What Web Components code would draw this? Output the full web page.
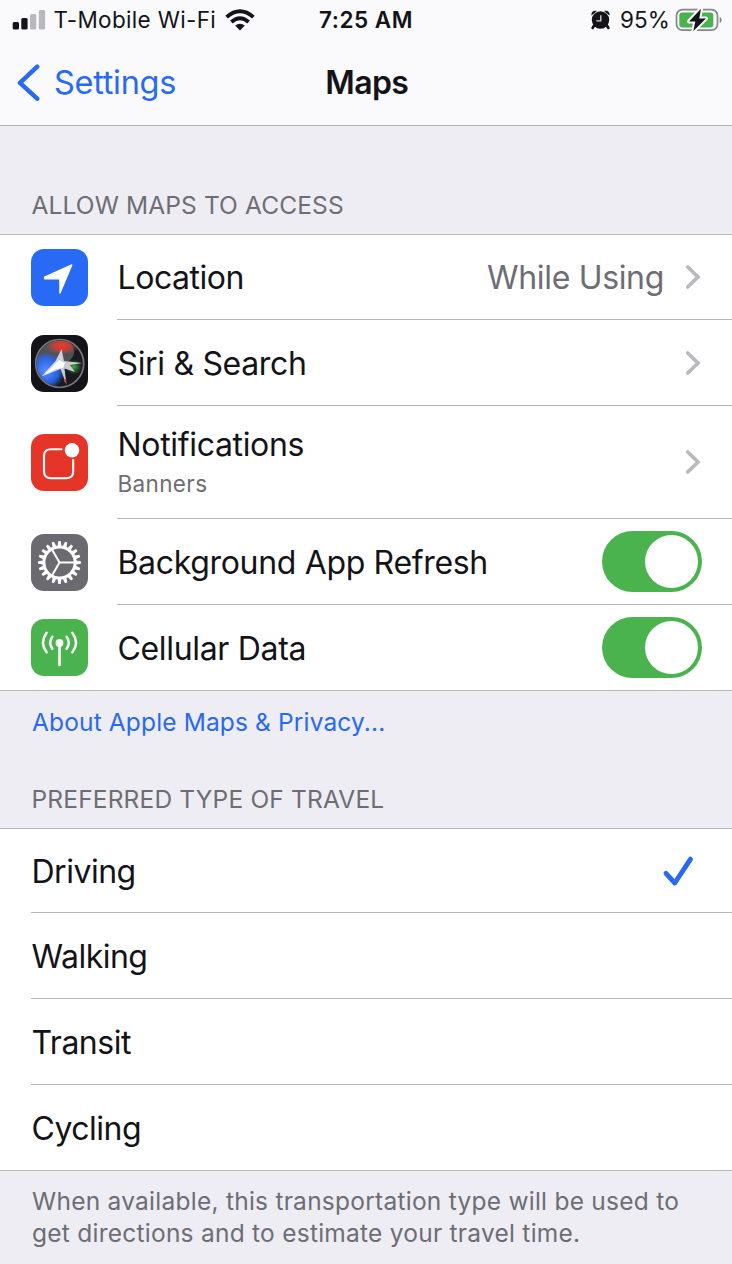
<!DOCTYPE html>
<html lang="en">
<head>
<meta charset="utf-8">
<title>Maps</title>
<style>
html, body { margin: 0; }
body { width: 732px; height: 1264px; overflow: hidden; background: #eeedf4; color: #131318; font-family: Inter, "Liberation Sans", sans-serif; }
</style>
</head>
<body>
<settings-screen></settings-screen>
<script>
const define = (name, html) => customElements.define(name, class extends HTMLElement {
  constructor() {
    super();
    this.attachShadow({ mode: 'open' }).innerHTML = html;
  }
});

define('status-bar', `
<style>
:host { display: grid; grid-template-columns: 1fr auto 1fr; align-items: center; height: 40px; padding: 0 12px; font-size: 22.5px; line-height: 40px; white-space: nowrap; }
div { display: flex; align-items: center; }
svg { display: block; flex: none; }
.carrier { margin-left: 7.5px; letter-spacing: .34px; }
.wifi { margin-left: 9px; }
.time { font-weight: 600; letter-spacing: .5px; }
.right { justify-content: flex-end; margin-right: -3px; }
.pct { margin: 0 5px 0 9.5px; letter-spacing: .1px; }
</style>
<div>
  <svg width="34" height="22" viewBox="0 0 34 22"><g fill="#131318"><rect x=".7" y="13" width="6.3" height="7.5" rx="1.5"/><rect x="9.3" y="9" width="6.3" height="11.5" rx="1.5"/></g><g fill="#b8b8bd"><rect x="18" y="5" width="6.3" height="15.5" rx="1.5"/><rect x="26.8" y="1" width="6.3" height="19.5" rx="1.5"/></g></svg>
  <span class="carrier">T-Mobile Wi-Fi</span>
  <svg class="wifi" width="30" height="22" viewBox="0 0 30 22"><g fill="none" stroke="#131318" stroke-width="3.9"><path d="M1.6 8.1Q15-3.7 28.4 8.1"/><path d="M6.4 13Q15 5.6 23.6 13"/></g><path fill="#131318" d="M10.2 16.6Q15 12.9 19.8 16.6L15 21.5Z"/></svg>
</div>
<span class="time">7:25 AM</span>
<div class="right">
  <svg width="19" height="20" viewBox="0 0 19 20"><g fill="#131318"><circle cx="9.5" cy="10" r="8.7"/><path d="M.6 5.6C-.4 2.5 2.6-.3 5.9 1.1ZM18.4 5.6C19.4 2.5 16.4-.3 13.1 1.1Z"/><path d="M3.4 15L1.6 18M15.6 15L17.4 18" stroke="#131318" stroke-width="2.6" stroke-linecap="round"/></g><path d="M9.8 5.2V10.8H5.4" fill="none" stroke="#ddd" stroke-width="1.3"/></svg>
  <span class="pct">95%</span>
  <svg width="48" height="26" viewBox="0 0 48 26"><rect x="1.5" y="2.7" width="41" height="20.5" rx="6" fill="none" stroke="#85858a" stroke-width="1.7"/><path d="M44.7 9.7q4 3.2 0 6.5z" fill="#85858a"/><rect x="4.3" y="5.4" width="34" height="15" rx="3.2" fill="#4ab34e"/><path d="M26 1.8L14 14.4H20.3L18.4 24L31 11.4H24.3Z" fill="#131318" stroke="#fafafc" stroke-width="4" paint-order="stroke" stroke-linejoin="round"/></svg>
</div>`);

define('nav-bar', `
<style>
:host { display: grid; grid-template-columns: 1fr auto 1fr; align-items: center; height: 85px; padding: 0 17px; border-bottom: 1px solid #b0b0b5; line-height: 40px; }
.back { display: flex; align-items: center; color: #2869f5; font-size: 32.5px; letter-spacing: -.3px; }
svg { display: block; margin-right: 13px; }
h1 { margin: 0; padding-left: 1.5px; font-size: 32px; font-weight: 600; letter-spacing: -.6px; line-height: 40px; }
</style>
<div class="back"><svg width="24" height="38" viewBox="0 0 24 38"><path d="M20.2 2.7L3 18.9L20.2 34.7" fill="none" stroke="#2869f5" stroke-width="4.5" stroke-linecap="round" stroke-linejoin="round"/></svg><span><slot name="back"></slot></span></div>
<h1><slot></slot></h1>`);

define('section-header', `
<style>
:host { display: flex; align-items: flex-end; box-sizing: border-box; height: var(--h); padding: 0 32px 13px 31.5px; color: #6d6d73; font-size: 24.5px; line-height: 32px; letter-spacing: var(--ls, .17px); white-space: nowrap; }
</style><slot></slot>`);

define('section-footer', `
<style>
:host { display: block; padding: 15px 32px 0; color: #6d6d73; font-size: 24.5px; line-height: 32px; letter-spacing: .25px; white-space: nowrap; }
:host([link]) { color: #2869f5; letter-spacing: .14px; }
:host(:not([link])) { padding-top: 14px; }
</style><slot></slot>`);

define('list-group', `
<style>
:host { display: block; background: #fff; border-top: 1px solid #b6b6bb; border-bottom: 1px solid #b6b6bb; }
</style><slot></slot>`);

define('list-row', `
<style>
:host { display: flex; box-sizing: border-box; height: var(--h, 86px); padding-left: 31px; }
.body { flex: 1; display: flex; align-items: center; padding-right: 30px; border-bottom: 1px solid #b6b6bb; font-size: 32px; line-height: 40px; white-space: nowrap; }
:host([last]) { height: 85px; }
:host([last]) .body { border-bottom: 0; }
.lead { display: flex; align-items: center; }
.lead ::slotted(*) { margin-right: 29px; }
.label { flex: 1; padding: 2px 0 0 .5px; letter-spacing: var(--ls, -.33px); }
</style>
<div class="lead"><slot name="icon"></slot></div>
<div class="body"><div class="label"><slot></slot></div><slot name="trail"></slot></div>`);

define('row-subtitle', `
<style>:host { display: block; font-size: 22.5px; line-height: 34px; margin-top: 2px; color: #6d6d73; letter-spacing: .35px; }</style><slot></slot>`);
define('row-value', `
<style>:host { display: block; padding-top: 2px; color: #6d6d73; margin-right: 20px; letter-spacing: -.33px; }</style><slot></slot>`);
define('row-chevron', `
<style>:host, svg { display: block; }</style>
<svg width="18" height="26" viewBox="0 0 18 26"><path d="M3.7 3L14 13L3.7 23" fill="none" stroke="#b8b8bd" stroke-width="3.6" stroke-linecap="round" stroke-linejoin="miter"/></svg>`);
define('row-check', `
<style>:host, svg { display: block; } :host { margin-right: 8px; }</style>
<svg width="32" height="32" viewBox="0 0 32 32"><path d="M4 18.3L12.8 28L28.5 4.2" fill="none" stroke="#2869f5" stroke-width="4.9" stroke-linecap="round" stroke-linejoin="round"/></svg>`);
define('toggle-switch', `
<style>
:host { display: flex; box-sizing: border-box; justify-content: flex-end; width: 100px; height: 61px; padding: 4px; border-radius: 31px; background: #4ab34e; }
span { width: 53px; height: 53px; border-radius: 50%; background: #fff; }
</style><span></span>`);

let teeth = '';
for (let i = 0; i < 20; i++) teeth += `<path d="M26.6 12L27.3 7.1H29.7L30.4 12Z" transform="rotate(${i * 18} 28.5 28.5)"/>`;
const glyphs = {
  location: ['#2869f5', '<path d="M13.6 28.2L40.8 15.9L28.9 44.2V29.8H13.6Z" fill="#fff" stroke="#fff" stroke-width="1.3" stroke-linejoin="round"/>'],
  siri: ['#131318', `<defs>
    <radialGradient id="b"><stop offset="0" stop-color="#5e91ff"/><stop offset=".65" stop-color="#2869f5" stop-opacity=".9"/><stop offset="1" stop-color="#2869f5" stop-opacity="0"/></radialGradient>
    <radialGradient id="r"><stop offset="0" stop-color="#e83b2d"/><stop offset=".5" stop-color="#d03c31" stop-opacity=".85"/><stop offset="1" stop-color="#66666b" stop-opacity="0"/></radialGradient>
    <radialGradient id="g"><stop offset="0" stop-color="#4ab34e"/><stop offset="1" stop-color="#24602a" stop-opacity="0"/></radialGradient>
    <clipPath id="c"><circle cx="28.7" cy="28.5" r="23"/></clipPath></defs>
    <circle cx="28.7" cy="28.5" r="24" fill="#19191e" stroke="#77777c" stroke-width="1.7"/>
    <g clip-path="url(#c)"><ellipse cx="22" cy="17" rx="21" ry="14" fill="#5a5a61" opacity=".85"/><ellipse cx="31" cy="11" rx="18" ry="9" fill="url(#r)"/><ellipse cx="15" cy="36" rx="19" ry="19" fill="url(#b)"/><ellipse cx="43" cy="32" rx="9" ry="8" fill="url(#g)"/></g>
    <path d="M10.5 41.5L24.5 26L30.5 14L33 26L51.5 28L39 30L44 37L33.5 33.5L35.5 50L29.5 34Z" fill="#dfe1e8" opacity=".88"/><path d="M13 40L28 25L34 28L32 33L25 34Z" fill="#fff"/><circle cx="34" cy="45.5" r="1.3" fill="#e83b2d"/>`],
  notifications: ['#e53529', '<path d="M30.5 15.2H20Q13 15.2 13 22.2V37.2Q13 44.2 20 44.2H35.2Q42.2 44.2 42.2 37.2V26" fill="none" stroke="#fff" stroke-width="2.1" stroke-linecap="round"/><circle cx="41" cy="16.3" r="7.2" fill="#fff"/>'],
  refresh: ['#6b6a71', `<g fill="#fff">${teeth}</g><circle cx="28.5" cy="28.5" r="15.6" fill="none" stroke="#fff" stroke-width="3"/><path d="M28.5 28.5H43.5M28.5 28.5L20.7 15M28.5 28.5L20.7 42" stroke="#fff" stroke-width="2"/>`],
  cellular: ['#4ab34e', '<circle cx="28.5" cy="24" r="3.9" fill="#fff"/><path d="M28.5 26V46" stroke="#fff" stroke-width="2.6" stroke-linecap="round"/><path d="M21.4 17.7Q17 23.7 21.4 29.7M35.6 17.7Q40 23.7 35.6 29.7M15.6 13.8Q8.4 23.7 15.6 33.2M41.4 13.8Q48.6 23.7 41.4 33.2" fill="none" stroke="#fff" stroke-width="2.5" stroke-linecap="round"/>']
};
customElements.define('app-icon', class extends HTMLElement {
  constructor() { super(); this.attachShadow({ mode: 'open' }); }
  connectedCallback() {
    const [color, art] = glyphs[this.getAttribute('name')];
    this.shadowRoot.innerHTML = `<style>:host, svg { display: block; } :host { width: 57px; height: 57px; border-radius: 13px; background: ${color}; }</style><svg width="57" height="57" viewBox="0 0 57 57">${art}</svg>`;
  }
});

define('settings-screen', `
<style>
:host { display: block; }
.top { background: #fafafc; }
.travel { --ls: -.5px; }
</style>
<div class="top"><status-bar></status-bar><nav-bar><span slot="back">Settings</span>Maps</nav-bar></div>
<section-header style="--h:108px; --ls:.13px">ALLOW MAPS TO ACCESS</section-header>
<list-group>
  <list-row style="--h:85px; --ls:-.45px"><app-icon slot="icon" name="location"></app-icon>Location<row-value slot="trail">While Using</row-value><row-chevron slot="trail"></row-chevron></list-row>
  <list-row><app-icon slot="icon" name="siri"></app-icon>Siri &amp; Search<row-chevron slot="trail"></row-chevron></list-row>
  <list-row style="--h:113px"><app-icon slot="icon" name="notifications"></app-icon>Notifications<row-subtitle>Banners</row-subtitle><row-chevron slot="trail"></row-chevron></list-row>
  <list-row><app-icon slot="icon" name="refresh"></app-icon>Background App Refresh<toggle-switch slot="trail"></toggle-switch></list-row>
  <list-row last><app-icon slot="icon" name="cellular"></app-icon>Cellular Data<toggle-switch slot="trail"></toggle-switch></list-row>
</list-group>
<section-footer link>About Apple Maps &amp; Privacy...</section-footer>
<section-header style="--h:90px">PREFERRED TYPE OF TRAVEL</section-header>
<list-group class="travel">
  <list-row style="--h:84px">Driving<row-check slot="trail"></row-check></list-row>
  <list-row>Walking</list-row>
  <list-row>Transit</list-row>
  <list-row last>Cycling</list-row>
</list-group>
<section-footer>When available, this transportation type will be used to<br>get directions and to estimate your travel time.</section-footer>`);
</script>
</body>
</html>
